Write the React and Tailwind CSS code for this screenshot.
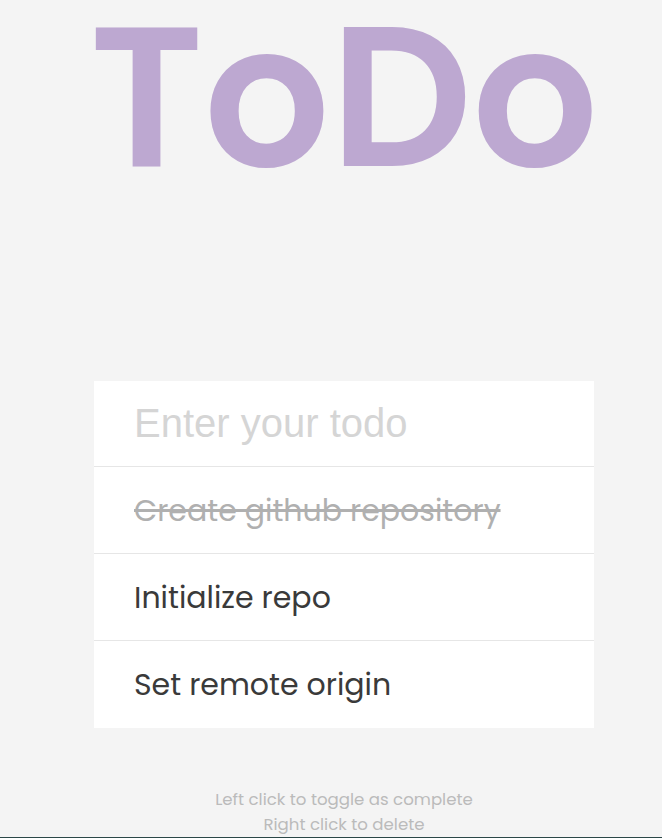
import { useState } from "react";

const initialTodos = [
  { id: 1, text: "Create github repository", done: true },
  { id: 2, text: "Initialize repo", done: false },
  { id: 3, text: "Set remote origin", done: false },
];

export default function App() {
  const [todos, setTodos] = useState(initialTodos);
  const [value, setValue] = useState("");

  const toggle = (id) =>
    setTodos((prev) => prev.map((t) => (t.id === id ? { ...t, done: !t.done } : t)));

  const remove = (e, id) => {
    e.preventDefault();
    setTodos((prev) => prev.filter((t) => t.id !== id));
  };

  const submit = (e) => {
    e.preventDefault();
    if (!value.trim()) return;
    setTodos((prev) => [...prev, { id: Date.now(), text: value, done: false }]);
    setValue("");
  };

  return (
    <div className="min-h-screen h-[838px] bg-[#f4f4f4] flex flex-col items-center pl-[26px] border-b border-[#2b4747] font-['Poppins','Lato',sans-serif]">
      {/* Title */}
      <h1 className="text-[198px] leading-[0.98] font-semibold text-[#bda8d1] select-none">
        ToDo
      </h1>

      {/* List */}
      <div className="mt-[187px] w-[500px] bg-white">
        <form onSubmit={submit} className="h-[86px] flex items-center border-b border-[#e6e6e6]">
          <input
            value={value}
            onChange={(e) => setValue(e.target.value)}
            placeholder="Enter your todo"
            className="w-full h-full px-10 outline-none text-[40px] text-[#333] placeholder:text-[#d5d5d5] font-['Liberation_Sans',Arial,sans-serif] bg-transparent"
          />
        </form>
        {todos.map((todo, i) => (
          <div
            key={todo.id}
            onClick={() => toggle(todo.id)}
            onContextMenu={(e) => remove(e, todo.id)}
            className={`h-[87px] flex items-center px-10 text-[30px] cursor-pointer select-none ${
              i < todos.length - 1 ? "border-b border-[#e6e6e6]" : ""
            } ${todo.done ? "line-through text-[#b0b0b0]" : "text-[#3a3a3a]"}`}
          >
            {todo.text}
          </div>
        ))}
      </div>

      {/* Hints */}
      <div className="mt-auto mb-0 text-center text-[16.6px] leading-[25px] text-[#bbbbbb]">
        <p>Left click to toggle as complete</p>
        <p>Right click to delete</p>
      </div>
    </div>
  );
}
